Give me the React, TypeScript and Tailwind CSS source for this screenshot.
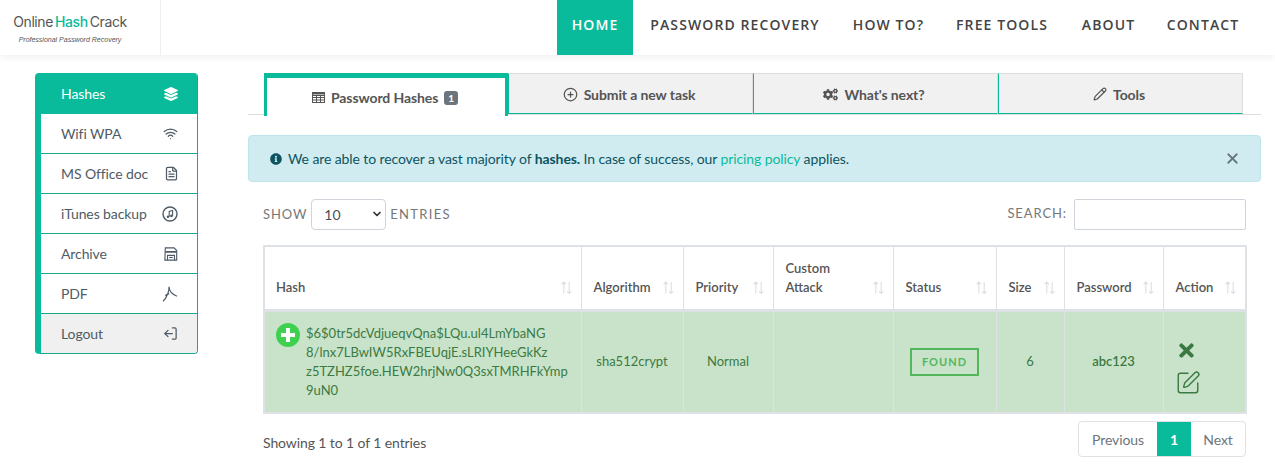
import { ChevronDown, CirclePlus, FileText, LogOut, Pencil, SquarePen, Wifi, X } from "lucide-react";
import { FaCogs, FaInfoCircle, FaLayerGroup, FaTimes } from "react-icons/fa";

const navItems = [
  { label: "Home", active: true, cls: "w-[76px]" },
  { label: "Password Recovery", cls: "w-[204px]" },
  { label: "How to?", cls: "w-[103px]" },
  { label: "Free Tools", cls: "w-[124px]" },
  { label: "About", cls: "w-[89px]" },
  { label: "Contact", cls: "w-[100px]" },
];

function MusicIcon() {
  return (
    <svg viewBox="0 0 16 16" className="h-[16px] w-[16px]" fill="none" stroke="currentColor">
      <circle cx="8" cy="8" r="7" strokeWidth="1.4" />
      <path d="M7.2 10.8V5.4l3.4-.9v5.2" strokeWidth="1.1" />
      <circle cx="6" cy="10.8" r="1.3" fill="currentColor" stroke="none" />
      <circle cx="9.4" cy="9.9" r="1.3" fill="currentColor" stroke="none" />
    </svg>
  );
}

function PdfIcon() {
  return (
    <svg viewBox="0 0 16 16" className="h-[16px] w-[16px]" fill="none" stroke="currentColor" strokeWidth="1.2">
      <path d="M7 .8c.2 2.4-.2 4.4-1.2 7C4.700 10.600 3 13.600 1 15.200M7 .8c.2 3.500 2 7.300 8 9.400M7.200 7.600c-1.800.5-3 1.200-4 2" />
    </svg>
  );
}

function ArchiveIcon() {
  return (
    <svg viewBox="0 0 16 16" className="h-[14px] w-[14px]" fill="none" stroke="currentColor" strokeWidth="1.3">
      <path d="M1.500 1h10l3 3v11h-13.500z" />
      <path d="M1.500 5.500h13" strokeWidth="2" />
      <path d="M4 15V9.500h8V15" />
      <path d="M6 12h4" />
    </svg>
  );
}

function TableIcon() {
  return (
    <svg viewBox="0 0 13 11" className="h-[11px] w-[13px]" fill="none" stroke="currentColor" strokeWidth="1">
      <rect x=".5" y=".5" width="12" height="10" />
      <path d="M.5 3.500h12M.5 5.500h12M.5 8h12M4.500 3.500v7M8.500 3.500v7" />
      <path d="M.5 1.700h12" strokeWidth="1.500" />
    </svg>
  );
}

const sideItems = [
  { label: "Wifi WPA", icon: <Wifi size={15} /> },
  { label: "MS Office doc", icon: <FileText size={15} className="mr-[-1px]" /> },
  { label: "iTunes backup", icon: <MusicIcon /> },
  { label: "Archive", icon: <ArchiveIcon /> },
  { label: "PDF", icon: <PdfIcon /> },
];

const tabs = [
  { label: "Submit a new task", icon: <CirclePlus size={15} /> },
  { label: "What's next?", icon: <FaCogs size={15} /> },
  { label: "Tools", icon: <Pencil size={14} /> },
];

const columns = [
  { label: "Hash", w: "w-[317px]" },
  { label: "Algorithm", w: "w-[102px]" },
  { label: "Priority", w: "w-[90px]" },
  { label: "Custom Attack", w: "w-[120px]" },
  { label: "Status", w: "w-[103px]" },
  { label: "Size", w: "w-[68px]" },
  { label: "Password", w: "w-[99px]" },
  { label: "Action", w: "w-[83px]" },
];

const hashLines = [
  "$6$0tr5dcVdjueqvQna$LQu.ul4LmYbaNG",
  "8/lnx7LBwIW5RxFBEUqjE.sLRIYHeeGkKz",
  "z5TZHZ5foe.HEW2hrjNw0Q3sxTMRHFkYmp",
  "9uN0",
];

function SortArrows() {
  return (
    <svg viewBox="0 0 12 12" className="absolute bottom-[15px] right-[8px] h-[13px] w-[13px] text-[#dcdfe2]" fill="none" stroke="currentColor" strokeWidth="1">
      <path d="M3.500 11.500V1M1.500 3l2-2 2 2M8.500 1v10.500M6.500 9.500l2 2 2-2" />
    </svg>
  );
}

export default function App() {
  return (
    <div className="h-[472px] w-[1275px] overflow-hidden bg-white font-['Lato',sans-serif] text-[14px] tracking-[-0.1px] text-[#555]">
      <header className="flex h-[55px] justify-between bg-white pr-[22px] shadow-[0_2px_8px_rgba(0,0,0,0.07)]">
        <div className="flex w-[161px] flex-col items-center border-r border-[#eee] pr-[20px] pt-[14px]">
          <div className="flex gap-[2px] font-['Inter',sans-serif] text-[14px] leading-[16px] tracking-[-0.4px] text-[#555]">
            <span>Online</span>
            <span className="font-medium text-[#0abb9b]">Hash</span>
            <span>Crack</span>
          </div>
          <div className="mt-[5px] whitespace-nowrap font-['Liberation_Sans',sans-serif] text-[7px] italic tracking-normal text-[#555]">Professional Password Recovery</div>
        </div>
        <nav className="flex">
          {navItems.map((n) => (
            <a key={n.label} className={`flex items-center justify-center pb-[7px] font-['Open_Sans',sans-serif] text-[14px] font-semibold uppercase tracking-[1.1px] ${n.cls} ${n.active ? "bg-[#0abb9b] text-white" : "text-[#444]"}`}>
              {n.label}
            </a>
          ))}
        </nav>
      </header>

      <div className="flex pl-[35px] pt-[18px]">
        <aside className="flex h-[281px] w-[163px] shrink-0 flex-col overflow-hidden rounded-[4px] border-r border-b border-[#17a98d] border-l-[6px] border-l-[#0abb9b]">
          <div className="flex h-[41px] items-center justify-between bg-[#0abb9b] pl-[20px] pr-[19px] text-white">
            Hashes <FaLayerGroup size={14} />
          </div>
          {sideItems.map((s) => (
            <div key={s.label} className="flex h-[40px] items-center justify-between border-b border-[#17a98d] pl-[20px] pr-[19px] text-[#4f5b66]">
              {s.label} {s.icon}
            </div>
          ))}
          <div className="flex flex-1 items-center justify-between bg-[#f0f0f0] pl-[20px] pr-[19px] text-[#4f5b66]">
            Logout <LogOut size={15} className="-scale-x-100" />
          </div>
        </aside>

        <main className="ml-[50px] w-[1013px]">
          <div className="flex h-[42px] border-b border-[#ddd] pl-[16px]">
            <div className="flex h-[43px] w-[244px] items-center justify-center gap-[6px] border-x-[3px] border-t-[5px] border-[#0abb9b] bg-white pr-[2px] pt-[1px] font-bold text-[#555]">
              <TableIcon />
              <span>Password Hashes</span>
              <span className="rounded-[3px] bg-[#6c757d] px-[4px] text-[10px] leading-[14px] text-white">1</span>
            </div>
            {tabs.map((t) => (
              <div key={t.label} className="flex h-[41px] w-[245px] items-center justify-center gap-[5px] border-t border-r border-b border-l border-t-[#ddd] border-r-[#ddd] border-b-[#0abb9b] border-l-[#0abb9b] bg-[#f1f1f1] pr-[3px] pt-[1px] font-bold text-[#555]">
                {t.icon}
                <span className="ml-[1px]">{t.label}</span>
              </div>
            ))}
          </div>

          <div className="mt-[20px] flex h-[47px] items-center justify-between rounded-[4px] border border-[#bee5eb] bg-[#d1ecf1] pl-[21px] pr-[19px] text-[#0c5460]">
            <span className="flex items-center gap-[6px]">
              <FaInfoCircle size={12} />
              <span>
                We are able to recover a vast majority of <b>hashes.</b> In case of success, our <a className="text-[#0abb9b]">pricing policy</a> applies.
              </span>
            </span>
            <X size={17} strokeWidth={2.500} className="text-[#66777c]" />
          </div>

          <div className="ml-[15px] mr-[15px] mt-[16px] flex h-[32px] items-center justify-between text-[13px] uppercase tracking-[0.9px] text-[#777]">
            <div className="flex items-center gap-[4px]">
              <span className="pt-[1px]">Show</span>
              <div className="flex h-[31px] w-[75px] items-center justify-between rounded-[4px] border border-[#ced4da] pl-[12px] pr-[2px] text-[14px] tracking-normal text-[#495057]">
                10 <ChevronDown size={12} strokeWidth={3.500} className="text-[#333]" />
              </div>
              <span className="pt-[1px] tracking-[1.3px]">Entries</span>
            </div>
            <div className="flex items-center gap-[7px]">
              Search:
              <div className="h-[31px] w-[172px] rounded-[2px] border border-[#ced4da]" />
            </div>
          </div>

          <table className="ml-[15px] mt-[15px] w-[982px] table-fixed border-collapse border-2 border-[#dee2e6] text-[13px] tracking-normal">
            <thead>
              <tr className="h-[64px] border-b-[3px] border-[#dee2e6]">
                {columns.map((c) => (
                  <th key={c.label} className={`relative border-x border-[#dee2e6] pb-[12px] pl-[12px] pr-[28px] text-left align-bottom text-[13px] font-semibold leading-[19px] text-[#555] first:pl-[11px] ${c.w}`}>
                    {c.label}
                    <SortArrows />
                  </th>
                ))}
              </tr>
            </thead>
            <tbody>
              <tr className="h-[103px] bg-[#c9e3ca] text-center text-[#3b7a42]">
                <td className="border-x border-[#dee2e6] pl-[11px] pr-[8px] text-left">
                  <div className="flex gap-[6px]">
                    <span className="flex h-[24px] w-[24px] shrink-0 items-center justify-center rounded-full bg-[#3fd04f]">
                      <svg viewBox="0 0 14 14" className="h-[14px] w-[14px]" fill="white">
                        <path d="M5 0h4v5h5v4H9v5H5V9H0V5h5z" />
                      </svg>
                    </span>
                    <span className="whitespace-nowrap pt-[1px] leading-[19px]">
                      {hashLines.map((l) => (
                        <span key={l} className="block">{l}</span>
                      ))}
                    </span>
                  </div>
                </td>
                <td className="border-x border-[#dee2e6]">sha512crypt</td>
                <td className="border-x border-[#dee2e6]">Normal</td>
                <td className="border-x border-[#dee2e6]" />
                <td className="border-x border-[#dee2e6]">
                  <span className="inline-block w-[69px] border-2 border-[#54b65b] py-[4px] text-[11px] font-bold tracking-[1px] text-[#54b65b]">FOUND</span>
                </td>
                <td className="border-x border-[#dee2e6]">6</td>
                <td className="border-x border-[#dee2e6] font-semibold">abc123</td>
                <td className="border-x border-[#dee2e6] pl-[11px] pt-[13px] text-left text-[#3a7a42]">
                  <FaTimes size={21} className="ml-[1px] h-[21px] w-[21px]" />
                  <SquarePen size={26} strokeWidth={1.300} className="mt-[9px]" />
                </td>
              </tr>
            </tbody>
          </table>

          <div className="ml-[15px] mt-[7px] flex w-[983px] items-center justify-between">
            <span className="pt-[6px] text-[#555]">Showing 1 to 1 of 1 entries</span>
            <div className="flex h-[36px] items-center overflow-hidden rounded-[4px] border border-[#dee2e6] text-[#6c757d]">
              <span className="w-[78px] text-center">Previous</span>
              <span className="flex h-full w-[34px] items-center justify-center bg-[#0abb9b] font-bold text-white">1</span>
              <span className="w-[54px] text-center">Next</span>
            </div>
          </div>
        </main>
      </div>
    </div>
  );
}
